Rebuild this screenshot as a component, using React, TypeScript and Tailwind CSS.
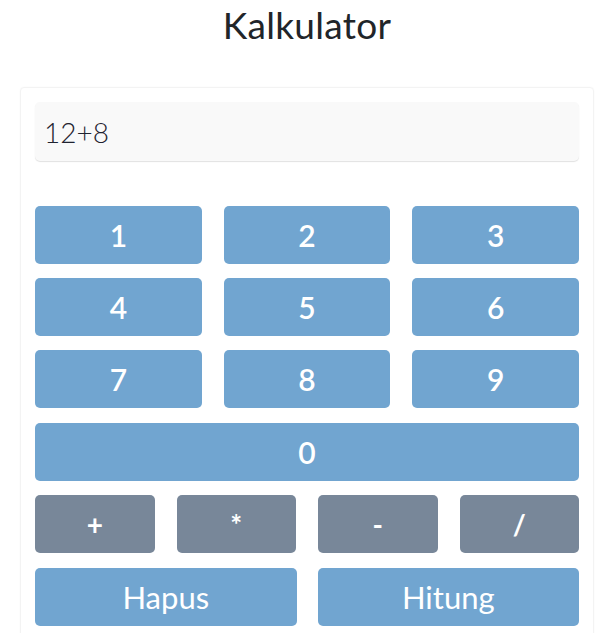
import React from "react";

const Btn = ({ label, gray = false, wide = false, big = false }: { label: string; gray?: boolean; wide?: boolean; big?: boolean }) => (
  <button
    className={
      (gray ? "bg-[#788799] font-bold " : "bg-[#71a5d0] ") +
      (big ? "font-normal text-[31px] " : gray ? "text-[28px] " : "font-semibold text-[30px] ") +
      (wide ? "col-span-3 mt-px " : "") +
      "w-full h-[58px] rounded-[5px] text-white leading-none flex items-center justify-center"
    }
  >
    {label}
  </button>
);

export default function App() {
  return (
    <div className="min-h-[633px] bg-white text-[#212529]" style={{ fontFamily: "Lato, 'Noto Sans', sans-serif" }}>
      <h1 className="text-center text-[37px] font-normal leading-none pt-[6px] h-[87px] tracking-[0.3px]">Kalkulator</h1>
      <div className="mx-[20px] border border-[#f3f3f3] rounded-[4px] px-[14px] pt-[14px] pb-[20px] shadow-[0_0_2px_rgba(0,0,0,0.03)]">
        <div className="h-[59px] rounded-[5px] bg-[#f9f9f9] shadow-[0_1px_1px_rgba(0,0,0,0.12)] flex items-center px-[9px] text-[28px] font-light text-[#1f2330]">
          12+8
        </div>
        <div className="mt-[45px] grid grid-cols-3 gap-x-[22px] gap-y-[14px]">
          {["1", "2", "3", "4", "5", "6", "7", "8", "9"].map((n) => (
            <Btn key={n} label={n} />
          ))}
          <Btn label="0" wide />
        </div>
        <div className="mt-[14px] grid grid-cols-4 gap-x-[22px]">
          {["+", "*", "-", "/"].map((o) => (
            <Btn key={o} label={o} gray />
          ))}
        </div>
        <div className="mt-[15px] grid grid-cols-2 gap-x-[21px]">
          <Btn label="Hapus" big />
          <Btn label="Hitung" big />
        </div>
      </div>
    </div>
  );
}
